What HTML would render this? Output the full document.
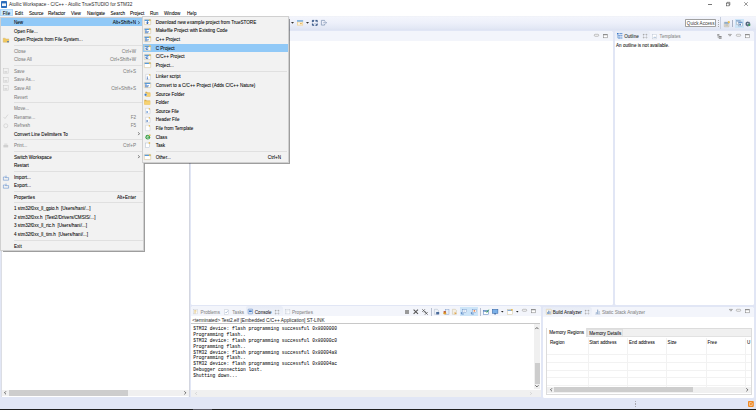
<!DOCTYPE html>
<html><head><meta charset="utf-8"><style>
*{box-sizing:border-box;margin:0;padding:0}
html,body{width:756px;height:410px;overflow:hidden;background:#e1e6f5;font-family:"Liberation Sans",sans-serif;font-size:4.6px;color:#000}
.a{position:absolute}
svg.a{overflow:visible}
.t{position:absolute;white-space:nowrap;line-height:6px;-webkit-text-stroke-width:0.05px}
.mono{font-family:"Liberation Mono",monospace;font-size:4.62px;-webkit-text-stroke-width:0.04px}
.dis{color:#828282}
.g{color:#8a8a8a}
</style></head><body>
<div class="a" style="left:0px;top:0px;width:756px;height:16.3px;background:#fff"></div>
<div class="a" style="left:1px;top:1px;width:5.9px;height:6.5px;background:#2a6cbc;border-radius:0.8px"></div>
<div class="a" style="left:2.1px;top:2.8px;width:3.7px;height:3.3px;background:#eef3f9;border-top:0.6px solid #9dbde0"></div>
<div class="t " style="left:9px;top:2.30px;color:#2a2a2a;-webkit-text-stroke-width:0;font-size:4.72px">Atollic Workspace - C/C++ - Atollic TrueSTUDIO for STM32</div>
<div class="a" style="left:707.9px;top:4.1px;width:4.4px;height:0.5px;background:#777"></div>
<svg class="a" style="left:726px;top:2px" width="4.2" height="4.2" viewBox="0 0 42 42"><rect x="3" y="11" width="28" height="28" fill="none" stroke="#333" stroke-width="5"/><path d="M11 11V3h28v28h-8" fill="none" stroke="#333" stroke-width="5"/></svg>
<svg class="a" style="left:744px;top:2px" width="4" height="4" viewBox="0 0 40 40"><path d="M2 2L38 38M38 2L2 38" stroke="#333" stroke-width="5"/></svg>
<div class="a" style="left:0px;top:8.9px;width:13px;height:7.4px;background:#cce8ff;border:0.5px solid #b0d8fb"></div>
<div class="t " style="left:2.8px;top:10.70px;">File</div>
<div class="t " style="left:15px;top:10.70px;">Edit</div>
<div class="t " style="left:29px;top:10.70px;">Source</div>
<div class="t " style="left:48px;top:10.70px;">Refactor</div>
<div class="t " style="left:71px;top:10.70px;">View</div>
<div class="t " style="left:87px;top:10.70px;">Navigate</div>
<div class="t " style="left:110.5px;top:10.70px;">Search</div>
<div class="t " style="left:130px;top:10.70px;">Project</div>
<div class="t " style="left:150px;top:10.70px;">Run</div>
<div class="t " style="left:164px;top:10.70px;">Window</div>
<div class="t " style="left:187px;top:10.70px;">Help</div>
<div class="a" style="left:0px;top:16.3px;width:756px;height:14.2px;background:linear-gradient(#eef0f6 0%,#f3f5fc 8%,#edf0fa 50%,#e3e8f5 85%,#dde3f2 100%)"></div>
<div class="a" style="left:1.2px;top:30.5px;width:188.3px;height:366px;background:#fff;border-radius:2.6px 2.6px 1.5px 1.5px;overflow:hidden"><div class="a" style="left:0;top:0;width:188.3px;height:10.2px;background:#f3f5fb"></div></div>
<div class="a" style="left:191px;top:30.5px;width:422px;height:274px;background:#fff;border-radius:2.6px 2.6px 1.5px 1.5px;overflow:hidden"><div class="a" style="left:0;top:0;width:422px;height:10.2px;background:#f3f5fb"></div></div>
<div class="a" style="left:614.6px;top:30.5px;width:139.7px;height:274.5px;background:#fff;border-radius:2.6px 2.6px 1.5px 1.5px;overflow:hidden"><div class="a" style="left:0;top:0;width:139.7px;height:10.2px;background:#f3f5fb"></div></div>
<div class="a" style="left:191.3px;top:306.1px;width:350px;height:90.7px;background:#fff;border-radius:2.6px 2.6px 1.5px 1.5px;overflow:hidden"><div class="a" style="left:0;top:0;width:350px;height:10.4px;background:#f3f5fb"></div></div>
<div class="a" style="left:542.8px;top:306.5px;width:211.5px;height:91px;background:#fff;border-radius:2.6px 2.6px 1.5px 1.5px;overflow:hidden"><div class="a" style="left:0;top:0;width:211.5px;height:10px;background:#f3f5fb"></div></div>
<div class="a" style="left:0px;top:408.7px;width:756px;height:1.3px;background:#1f1f1f"></div>
<div class="a" style="left:192.9px;top:408.7px;width:19.2px;height:1.3px;background:#5c5c66"></div>
<div class="a" style="left:0;top:0;width:756px;height:410px;z-index:10">
<div class="a" style="left:0px;top:16.8px;width:144.2px;height:234px;background:#f2f2f2;border:0.5px solid #d0d0d0;box-shadow:0.9px 0.9px 0.7px rgba(0,0,0,.38)"></div>
<div class="a" style="left:1px;top:17.9px;width:141.5px;height:8.4px;background:#91c9f7"></div>
<div class="t " style="left:14px;top:20.00px;">New</div>
<svg class="a" style="left:137.6px;top:20.5px" width="1.8" height="3.4" viewBox="0 0 18 34"><path d="M3 3l11 14L3 31" fill="none" stroke="#2a2a2a" stroke-width="6.5"/></svg>
<div class="t " style="left:89px;width:47px;text-align:right;top:20.00px">Alt+Shift+N</div>
<div class="t " style="left:14px;top:28.62px;">Open File...</div>
<div class="t " style="left:14px;top:37.24px;">Open Projects from File System...</div>
<div class="a" style="left:14px;top:44.849999999999994px;width:128.8px;height:0.5px;background:#e0e0e0"></div>
<div class="t dis" style="left:14px;top:48.66px;">Close</div>
<div class="t dis" style="left:89px;width:47px;text-align:right;top:48.66px">Ctrl+W</div>
<div class="t dis" style="left:14px;top:57.28px;">Close All</div>
<div class="t dis" style="left:89px;width:47px;text-align:right;top:57.28px">Ctrl+Shift+W</div>
<div class="a" style="left:14px;top:64.89px;width:128.8px;height:0.5px;background:#e0e0e0"></div>
<div class="t dis" style="left:14px;top:68.70px;">Save</div>
<div class="t dis" style="left:89px;width:47px;text-align:right;top:68.70px">Ctrl+S</div>
<div class="t dis" style="left:14px;top:77.32px;">Save As...</div>
<div class="t dis" style="left:14px;top:85.94px;">Save All</div>
<div class="t dis" style="left:89px;width:47px;text-align:right;top:85.94px">Ctrl+Shift+S</div>
<div class="t dis" style="left:14px;top:94.56px;">Revert</div>
<div class="a" style="left:14px;top:102.17000000000002px;width:128.8px;height:0.5px;background:#e0e0e0"></div>
<div class="t dis" style="left:14px;top:105.98px;">Move...</div>
<div class="t dis" style="left:14px;top:114.60px;">Rename...</div>
<div class="t dis" style="left:89px;width:47px;text-align:right;top:114.60px">F2</div>
<div class="t dis" style="left:14px;top:123.22px;">Refresh</div>
<div class="t dis" style="left:89px;width:47px;text-align:right;top:123.22px">F5</div>
<div class="t " style="left:14px;top:131.84px;">Convert Line Delimiters To</div>
<svg class="a" style="left:137.6px;top:132.34000000000003px" width="1.8" height="3.4" viewBox="0 0 18 34"><path d="M3 3l11 14L3 31" fill="none" stroke="#2a2a2a" stroke-width="6.5"/></svg>
<div class="a" style="left:14px;top:139.45000000000002px;width:128.8px;height:0.5px;background:#e0e0e0"></div>
<div class="t dis" style="left:14px;top:143.26px;">Print...</div>
<div class="t dis" style="left:89px;width:47px;text-align:right;top:143.26px">Ctrl+P</div>
<div class="a" style="left:14px;top:150.87000000000003px;width:128.8px;height:0.5px;background:#e0e0e0"></div>
<div class="t " style="left:14px;top:154.68px;">Switch Workspace</div>
<svg class="a" style="left:137.6px;top:155.18000000000006px" width="1.8" height="3.4" viewBox="0 0 18 34"><path d="M3 3l11 14L3 31" fill="none" stroke="#2a2a2a" stroke-width="6.5"/></svg>
<div class="t " style="left:14px;top:163.30px;">Restart</div>
<div class="a" style="left:14px;top:170.91000000000005px;width:128.8px;height:0.5px;background:#e0e0e0"></div>
<div class="t " style="left:14px;top:174.72px;">Import...</div>
<div class="t " style="left:14px;top:183.34px;">Export...</div>
<div class="a" style="left:14px;top:190.95000000000007px;width:128.8px;height:0.5px;background:#e0e0e0"></div>
<div class="t " style="left:14px;top:194.76px;">Properties</div>
<div class="t " style="left:89px;width:47px;text-align:right;top:194.76px">Alt+Enter</div>
<div class="a" style="left:14px;top:202.3700000000001px;width:128.8px;height:0.5px;background:#e0e0e0"></div>
<div class="t " style="left:14px;top:206.18px;">1 stm32f0xx_ll_gpio.h&nbsp; [Users/hani/...]</div>
<div class="t " style="left:14px;top:214.80px;">2 stm32f0xx.h&nbsp; [Test2/Drivers/CMSIS/...]</div>
<div class="t " style="left:14px;top:223.42px;">3 stm32f0xx_ll_rtc.h&nbsp; [Users/hani/...]</div>
<div class="t " style="left:14px;top:232.04px;">4 stm32f0xx_ll_tim.h&nbsp; [Users/hani/...]</div>
<div class="a" style="left:14px;top:239.65000000000012px;width:128.8px;height:0.5px;background:#e0e0e0"></div>
<div class="t " style="left:14px;top:243.91px;">Exit</div>
<div class="a" style="left:141.9px;top:16.3px;width:147.3px;height:146.4px;background:#f2f2f2;border:0.5px solid #d0d0d0;box-shadow:0.9px 0.9px 0.7px rgba(0,0,0,.38)"></div>
<div class="a" style="left:142.8px;top:43.6px;width:145.4px;height:8.3px;background:#91c9f7"></div>
<div class="t " style="left:155.7px;top:19.80px;">Download new example project from TrueSTORE</div>
<div class="t " style="left:155.7px;top:28.42px;">Makefile Project with Existing Code</div>
<div class="t " style="left:155.7px;top:37.04px;">C++ Project</div>
<div class="t " style="left:155.7px;top:45.66px;">C Project</div>
<div class="t " style="left:155.7px;top:54.28px;">C/C++ Project</div>
<div class="t " style="left:155.7px;top:62.90px;">Project...</div>
<div class="a" style="left:155.5px;top:70.51px;width:131.5px;height:0.5px;background:#e0e0e0"></div>
<div class="t " style="left:155.7px;top:74.32px;">Linker script</div>
<div class="t " style="left:155.7px;top:82.94px;">Convert to a C/C++ Project (Adds C/C++ Nature)</div>
<div class="t " style="left:155.7px;top:91.56px;">Source Folder</div>
<div class="t " style="left:155.7px;top:100.18px;">Folder</div>
<div class="t " style="left:155.7px;top:108.80px;">Source File</div>
<div class="t " style="left:155.7px;top:117.42px;">Header File</div>
<div class="t " style="left:155.7px;top:126.04px;">File from Template</div>
<div class="t " style="left:155.7px;top:134.66px;">Class</div>
<div class="t " style="left:155.7px;top:143.28px;">Task</div>
<div class="a" style="left:155.5px;top:150.89000000000001px;width:131.5px;height:0.5px;background:#e0e0e0"></div>
<div class="t " style="left:155.7px;top:154.70px;">Other...</div>
<div class="t" style="left:250px;width:31px;text-align:right;top:154.70px">Ctrl+N</div>
<svg class="a" style="left:3px;top:36.5px" width="6" height="5.5" viewBox="0 0 60 55"><path d="M2 12h20l6 7h30v34H2z" fill="#f0c860" stroke="#c9a040" stroke-width="3"/><circle cx="50" cy="48" r="8" fill="#2a64c0"/></svg>
<svg class="a" style="left:3.2px;top:68.2px" width="5.6" height="5.6" viewBox="0 0 56 56"><rect x="4" y="4" width="48" height="48" fill="none" stroke="#c8c8c8" stroke-width="5"/><rect x="14" y="30" width="28" height="18" fill="#d8d8d8"/></svg>
<svg class="a" style="left:3.2px;top:76.8px" width="5.6" height="5.6" viewBox="0 0 56 56"><rect x="4" y="4" width="48" height="48" fill="none" stroke="#c8c8c8" stroke-width="5"/><rect x="14" y="30" width="28" height="18" fill="#d8d8d8"/></svg>
<svg class="a" style="left:3.2px;top:85.4px" width="5.6" height="5.6" viewBox="0 0 56 56"><rect x="4" y="4" width="48" height="48" fill="none" stroke="#c8c8c8" stroke-width="5"/><rect x="14" y="30" width="28" height="18" fill="#d8d8d8"/></svg>
<svg class="a" style="left:3.2px;top:114.2px" width="5.6" height="5.6" viewBox="0 0 56 56"><path d="M6 30l14 16 30-40" fill="none" stroke="#c8c8c8" stroke-width="6"/></svg>
<svg class="a" style="left:3.2px;top:122.6px" width="5.6" height="5.6" viewBox="0 0 56 56"><circle cx="28" cy="28" r="20" fill="none" stroke="#c8c8c8" stroke-width="6"/></svg>
<svg class="a" style="left:3.2px;top:142.6px" width="5.6" height="5.6" viewBox="0 0 56 56"><rect x="4" y="20" width="48" height="24" fill="#d0d0d0"/><rect x="12" y="4" width="32" height="16" fill="#e0e0e0"/></svg>
<svg class="a" style="left:2.8px;top:174.6px" width="6" height="5.6" viewBox="0 0 60 56"><path d="M4 20h18l4 6h30v26H4z" fill="none" stroke="#4a80c8" stroke-width="5"/><path d="M30 6v20" stroke="#4a80c8" stroke-width="6"/></svg>
<svg class="a" style="left:2.8px;top:183.2px" width="6" height="5.6" viewBox="0 0 60 56"><path d="M4 20h18l4 6h30v26H4z" fill="none" stroke="#4a80c8" stroke-width="5"/><path d="M30 26V6" stroke="#4a80c8" stroke-width="6"/></svg>
<svg class="a" style="left:143.9px;top:19.1px" width="7" height="6" viewBox="0 0 70 60"><rect x="3" y="4" width="64" height="52" rx="3" fill="#fff" stroke="#d6c59a" stroke-width="6"/><rect x="6" y="7" width="58" height="13" fill="#5a9ad8"/><circle cx="58" cy="12" r="10" fill="#e6c25a"/><path d="M34 22v24M24 36l10 12 10-12" stroke="#1f56a8" stroke-width="9" fill="none"/></svg>
<svg class="a" style="left:143.9px;top:27.72px" width="7" height="6" viewBox="0 0 70 60"><rect x="3" y="4" width="64" height="52" rx="3" fill="#fff" stroke="#d6c59a" stroke-width="6"/><rect x="6" y="7" width="58" height="13" fill="#5a9ad8"/><circle cx="58" cy="12" r="10" fill="#e6c25a"/><path d="M10 28h18M10 38h40M10 48h30" stroke="#2f68b8" stroke-width="7"/></svg>
<svg class="a" style="left:143.9px;top:36.339999999999996px" width="7" height="6" viewBox="0 0 70 60"><rect x="3" y="4" width="64" height="52" rx="3" fill="#fff" stroke="#d6c59a" stroke-width="6"/><rect x="6" y="7" width="58" height="13" fill="#5a9ad8"/><circle cx="58" cy="12" r="10" fill="#e6c25a"/><path d="M10 28h20M10 38h40M10 48h26" stroke="#2f68b8" stroke-width="7"/></svg>
<svg class="a" style="left:143.9px;top:44.96px" width="7" height="6" viewBox="0 0 70 60"><rect x="3" y="4" width="64" height="52" rx="3" fill="#fff" stroke="#d6c59a" stroke-width="6"/><rect x="6" y="7" width="58" height="13" fill="#5a9ad8"/><circle cx="58" cy="12" r="10" fill="#e6c25a"/><rect x="8" y="22" width="40" height="30" fill="#d4e4f6"/><path d="M38 30a10 10 0 1 0 0 14" stroke="#1f56a8" stroke-width="8" fill="none"/></svg>
<svg class="a" style="left:143.9px;top:53.58px" width="7" height="6" viewBox="0 0 70 60"><rect x="3" y="4" width="64" height="52" rx="3" fill="#fff" stroke="#d6c59a" stroke-width="6"/><rect x="6" y="7" width="58" height="13" fill="#5a9ad8"/><circle cx="58" cy="12" r="10" fill="#e6c25a"/><rect x="8" y="22" width="40" height="30" fill="#d4e4f6"/><path d="M38 30a10 10 0 1 0 0 14" stroke="#1f56a8" stroke-width="8" fill="none"/></svg>
<svg class="a" style="left:143.9px;top:62.199999999999996px" width="7" height="6" viewBox="0 0 70 60"><rect x="3" y="4" width="64" height="52" rx="3" fill="#fff" stroke="#d6c59a" stroke-width="6"/><rect x="6" y="7" width="58" height="13" fill="#5a9ad8"/><circle cx="58" cy="12" r="10" fill="#e6c25a"/></svg>
<svg class="a" style="left:144.6px;top:73.52px" width="6" height="6" viewBox="0 0 60 60"><path d="M8 3h34l12 12v42H8z" fill="#fff" stroke="#b0b8c8" stroke-width="4"/><circle cx="48" cy="9" r="8" fill="#e8c060"/><path d="M24 24v26M18 50h14" stroke="#2a5fae" stroke-width="6"/></svg>
<svg class="a" style="left:143.9px;top:82.24px" width="7" height="6" viewBox="0 0 70 60"><rect x="3" y="4" width="64" height="52" rx="3" fill="#fff" stroke="#d6c59a" stroke-width="6"/><rect x="6" y="7" width="58" height="13" fill="#5a9ad8"/><path d="M10 28h18M10 38h40M10 48h30" stroke="#2f68b8" stroke-width="7"/></svg>
<svg class="a" style="left:144.2px;top:90.75999999999999px" width="6.6" height="6" viewBox="0 0 66 60"><path d="M14 8h16l5 6h28v40H14z" fill="#dcae48"/><path d="M14 22h49v32H14z" fill="#f6d272"/><circle cx="16" cy="38" r="13" fill="#3d7ccc" stroke="#fff" stroke-width="3"/></svg>
<svg class="a" style="left:144.2px;top:99.38px" width="6.6" height="6" viewBox="0 0 66 60"><path d="M3 8h18l5 6h36v42H3z" fill="#dcae48"/><path d="M3 22h59v34H3z" fill="#f6d272"/></svg>
<svg class="a" style="left:144.8px;top:108.0px" width="5.6" height="6" viewBox="0 0 56 60"><path d="M6 3h32l12 12v42H6z" fill="#fff" stroke="#b0b8c8" stroke-width="4"/><circle cx="44" cy="9" r="8" fill="#e8c060"/><path d="M16 28l16 12-16 12z" fill="#3a78c8"/></svg>
<svg class="a" style="left:144.8px;top:116.61999999999999px" width="5.6" height="6" viewBox="0 0 56 60"><path d="M6 3h32l12 12v42H6z" fill="#fff" stroke="#b0b8c8" stroke-width="4"/><circle cx="44" cy="9" r="8" fill="#e8c060"/><path d="M16 28l16 12-16 12z" fill="#2a5fae"/></svg>
<svg class="a" style="left:144.8px;top:125.24000000000001px" width="5.6" height="6" viewBox="0 0 56 60"><path d="M6 3h32l12 12v42H6z" fill="#fff" stroke="#b8c0cc" stroke-width="4"/><circle cx="44" cy="9" r="8" fill="#e8c060"/></svg>
<svg class="a" style="left:144.6px;top:133.85999999999999px" width="6" height="6" viewBox="0 0 60 60"><circle cx="28" cy="32" r="24" fill="#3ea04a"/><path d="M38 24a11 11 0 1 0 0 16" stroke="#fff" stroke-width="7" fill="none"/><circle cx="48" cy="12" r="9" fill="#e8c060"/></svg>
<svg class="a" style="left:144.8px;top:142.48px" width="5.6" height="6" viewBox="0 0 56 60"><rect x="6" y="10" width="40" height="46" fill="#fff" stroke="#9fb0c4" stroke-width="4"/><circle cx="44" cy="10" r="9" fill="#e8c060"/></svg>
<svg class="a" style="left:143.9px;top:153.79999999999998px" width="7" height="6" viewBox="0 0 70 60"><rect x="3" y="4" width="64" height="52" rx="3" fill="#fff" stroke="#d6c59a" stroke-width="6"/><rect x="6" y="7" width="58" height="13" fill="#5a9ad8"/><circle cx="58" cy="12" r="10" fill="#e6c25a"/></svg>
</div>
<svg class="a" style="left:291.2px;top:22.1px" width="3" height="1.8" viewBox="0 0 30 18"><path d="M0 0h30L15 18z" fill="#333"/></svg>
<svg class="a" style="left:296.7px;top:19.8px" width="6.1" height="5.5" viewBox="0 0 61 55"><rect x="0" y="0" width="61" height="55" fill="#f2d496"/><rect x="0" y="0" width="61" height="18" fill="#8ab8e4"/><rect x="8" y="24" width="45" height="24" fill="#fbf4e6"/><rect x="30" y="30" width="18" height="12" fill="#e8b860"/></svg>
<svg class="a" style="left:306.3px;top:22.1px" width="3" height="1.8" viewBox="0 0 30 18"><path d="M0 0h30L15 18z" fill="#333"/></svg>
<svg class="a" style="left:311.8px;top:19.8px" width="5.6" height="5.7" viewBox="0 0 56 57"><g fill="none" stroke="#24467a" stroke-width="9"><path d="M4 22V4h18M34 4h18v18M52 35v18H34M22 53H4V35"/><path d="M8 8l12 12M48 8L36 20M48 49L36 37M8 49l12-12" stroke-width="7"/></g></svg>
<svg class="a" style="left:320.8px;top:20px" width="6.2" height="5.5" viewBox="0 0 62 55"><path d="M36 14V4H4v47h32V40" fill="none" stroke="#7a90b0" stroke-width="7"/><path d="M22 27h32M44 16l13 11-13 11" fill="none" stroke="#7a90b0" stroke-width="6"/></svg>
<div class="a" style="left:685.3px;top:19px;width:30.4px;height:8px;background:#fff;border:0.5px solid #a0a0a0;border-radius:0.8px"></div>
<div class="t " style="left:686.8px;top:20.90px;color:#3a3a3a;font-size:4.62px;-webkit-text-stroke-width:0">Quick Access</div>
<div class="a" style="left:718.1px;top:19.5px;width:0.5px;height:0.7px;background:#aaa"></div>
<div class="a" style="left:718.1px;top:21.5px;width:0.5px;height:0.7px;background:#aaa"></div>
<div class="a" style="left:718.1px;top:23.5px;width:0.5px;height:0.7px;background:#aaa"></div>
<div class="a" style="left:718.1px;top:25.5px;width:0.5px;height:0.7px;background:#aaa"></div>
<div class="a" style="left:720.2px;top:17.2px;width:0.5px;height:12px;background:#c7cfdf"></div>
<svg class="a" style="left:723.9px;top:20.6px" width="6.2" height="6.2" viewBox="0 0 62 62"><rect x="3" y="12" width="46" height="46" rx="3" fill="#f2ead8" stroke="#9a9486" stroke-width="4"/><rect x="5" y="14" width="42" height="12" fill="#5d8fcc"/><path d="M12 36h28M12 46h28" stroke="#7d8a9a" stroke-width="4"/><circle cx="48" cy="12" r="11" fill="#f0c050"/></svg>
<div class="a" style="left:732.2px;top:19.8px;width:0.6px;height:7.5px;background:#a9b2c4"></div>
<div class="a" style="left:734.7px;top:19px;width:9.2px;height:8.8px;background:#cce4f7"></div>
<svg class="a" style="left:735.8px;top:20.4px" width="7" height="6.4" viewBox="0 0 70 64"><rect x="3" y="3" width="40" height="44" fill="#eef2f6" stroke="#8898ac" stroke-width="4"/><rect x="5" y="5" width="36" height="10" fill="#6a9ad4"/><rect x="24" y="20" width="40" height="40" fill="#fff" stroke="#6f86a6" stroke-width="4"/><rect x="26" y="22" width="36" height="10" fill="#4f86c8"/><rect x="34" y="38" width="14" height="16" fill="#2f66b0"/></svg>
<svg class="a" style="left:745.3px;top:20.6px" width="6" height="6" viewBox="0 0 60 60"><g transform="translate(28 28)"><path d="M-5-24h10l2 8 7-4 7 7-4 7 8 2v10l-8 2 4 7-7 7-7-4-2 8h-10l-2-8-7 4-7-7 4-7-8-2v-10l8-2-4-7 7-7 7 4z" fill="#51647a"/><circle r="8" fill="#dfe8f0"/></g><path d="M30 40h22M42 32l10 8-10 8" stroke="#2aa048" stroke-width="7" fill="none"/></svg>
<svg class="a" style="left:594px;top:33.6px" width="5" height="2.6" viewBox="0 0 50 26"><rect x="3" y="3" width="44" height="20" rx="9" fill="#f4f4f4" stroke="#8c8c8c" stroke-width="5"/></svg>
<svg class="a" style="left:602.8px;top:33.9px" width="4.6" height="4.1" viewBox="0 0 46 41"><rect x="3" y="3" width="40" height="35" fill="#fff" stroke="#7c7c7c" stroke-width="5"/><rect x="3" y="3" width="40" height="9" fill="#7c7c7c"/></svg>
<div class="a" style="left:615.2px;top:30.6px;width:34.4px;height:10.1px;background:linear-gradient(#e8ecf6,#f0f3fa);border-radius:2px 2.5px 0 0"></div>
<svg class="a" style="left:616.8px;top:33.3px" width="5.4" height="5.8" viewBox="0 0 54 58"><g fill="#3b78c8"><rect x="0" y="0" width="16" height="14"/><rect x="24" y="3" width="30" height="8"/><rect x="14" y="22" width="14" height="12"/><rect x="32" y="24" width="22" height="8"/><rect x="14" y="44" width="14" height="12"/><rect x="32" y="46" width="22" height="8"/></g><path d="M7 14v36h7M7 28h7" stroke="#3b78c8" stroke-width="4" fill="none"/></svg>
<div class="t " style="left:624.2px;top:34.00px;color:#222">Outline</div>
<svg class="a" style="left:642.9px;top:34px" width="4.2" height="4.3" viewBox="0 0 42 43"><rect x="5" y="5" width="32" height="33" fill="none" stroke="#b0b0b0" stroke-width="4"/><path d="M3 11V3h8M31 3h8v8M39 32v8h-8M11 40H3v-8" fill="none" stroke="#858585" stroke-width="5"/></svg>
<svg class="a" style="left:652.2px;top:33.6px" width="5.3" height="5.4" viewBox="0 0 53 54"><rect x="3" y="3" width="44" height="46" fill="#fff" stroke="#b0bccc" stroke-width="4"/><path d="M12 40l10-18 8 12 6-8 8 14z" fill="#b8c8dc"/></svg>
<div class="t g" style="left:659.6px;top:34.00px;">Templates</div>
<svg class="a" style="left:716.9px;top:33.5px" width="4.8" height="4.6" viewBox="0 0 48 46"><rect x="2" y="2" width="22" height="14" fill="#8a8a8a"/><path d="M10 16v22h10M10 28h10" stroke="#8a8a8a" stroke-width="5" fill="none"/><rect x="20" y="22" width="26" height="10" fill="#6e6e6e"/><rect x="20" y="36" width="26" height="10" fill="#6e6e6e"/></svg>
<svg class="a" style="left:728.3px;top:33.5px" width="3.8" height="2.4" viewBox="0 0 38 24"><path d="M4 4h30L19 22z" fill="#f4f4f4" stroke="#787878" stroke-width="6"/></svg>
<svg class="a" style="left:736px;top:33.5px" width="5" height="2.6" viewBox="0 0 50 26"><rect x="3" y="3" width="44" height="20" rx="9" fill="#f4f4f4" stroke="#8c8c8c" stroke-width="5"/></svg>
<svg class="a" style="left:745px;top:34px" width="4.6" height="4.1" viewBox="0 0 46 41"><rect x="3" y="3" width="40" height="35" fill="#fff" stroke="#7c7c7c" stroke-width="5"/><rect x="3" y="3" width="40" height="9" fill="#7c7c7c"/></svg>
<div class="t " style="left:616px;top:43.00px;color:#111">An outline is not available.</div>
<div class="a" style="left:1.2px;top:40px;width:0.9px;height:356.5px;background:#dcdee4"></div>
<div class="a" style="left:188.8px;top:40px;width:0.7px;height:356.5px;background:#d3d6e0"></div>
<div class="a" style="left:2.1px;top:390px;width:186.7px;height:6.3px;background:#f0f0f0"></div>
<div class="a" style="left:9px;top:390.4px;width:118.8px;height:5.6px;background:#cdcdcd"></div>
<svg class="a" style="left:4.3px;top:391.3px" width="2.4" height="3.6" viewBox="0 0 24 36"><path d="M20 3L5 18l15 15" fill="none" stroke="#404040" stroke-width="8"/></svg>
<svg class="a" style="left:184px;top:391.3px" width="2.4" height="3.6" viewBox="0 0 24 36"><path d="M4 3l15 15L4 33" fill="none" stroke="#404040" stroke-width="8"/></svg>
<div class="a" style="left:246.2px;top:306.2px;width:36.4px;height:10.3px;background:linear-gradient(#e8ecf6,#f0f3fa);border-radius:2px 2.5px 0 0"></div>
<svg class="a" style="left:193.3px;top:309.3px" width="5.3" height="5.5" viewBox="0 0 53 55"><rect x="3" y="3" width="40" height="46" fill="#fff" stroke="#c0c4cc" stroke-width="4"/><path d="M12 16h22M12 28h22M12 40h16" stroke="#d0a030" stroke-width="5"/></svg>
<div class="t g" style="left:200.6px;top:310.00px;">Problems</div>
<svg class="a" style="left:224.4px;top:309.2px" width="5.9" height="5.8" viewBox="0 0 59 58"><rect x="6" y="8" width="40" height="44" fill="#fff" stroke="#b8c0cc" stroke-width="4"/><path d="M14 30l8 10 20-26" stroke="#7a9ac0" stroke-width="5" fill="none"/></svg>
<div class="t g" style="left:232.3px;top:310.00px;">Tasks</div>
<svg class="a" style="left:248.2px;top:309.4px" width="4.8" height="5" viewBox="0 0 48 50"><rect x="2" y="2" width="44" height="46" rx="4" fill="#fff" stroke="#2d63b0" stroke-width="5"/><rect x="10" y="14" width="28" height="18" fill="#3c74c0"/></svg>
<div class="t " style="left:254.8px;top:310.00px;color:#222">Console</div>
<svg class="a" style="left:274.9px;top:309.9px" width="4.2" height="4.3" viewBox="0 0 42 43"><rect x="5" y="5" width="32" height="33" fill="none" stroke="#b0b0b0" stroke-width="4"/><path d="M3 11V3h8M31 3h8v8M39 32v8h-8M11 40H3v-8" fill="none" stroke="#858585" stroke-width="5"/></svg>
<svg class="a" style="left:284.5px;top:309.3px" width="5.4" height="5.5" viewBox="0 0 54 55"><rect x="3" y="3" width="46" height="46" fill="#fff" stroke="#b8c0cc" stroke-width="4"/><path d="M3 18h46M18 18v30" stroke="#c8d0dc" stroke-width="4"/></svg>
<div class="t g" style="left:292px;top:310.00px;">Properties</div>
<div class="a" style="left:404.8px;top:310px;width:4.2px;height:4.2px;background:#9a9a9a"></div>
<svg class="a" style="left:413px;top:309.4px" width="5.8" height="5.4" viewBox="0 0 58 54"><path d="M6 6l44 42M50 6L6 48" stroke="#555" stroke-width="11"/></svg>
<svg class="a" style="left:421.7px;top:309.2px" width="6.3" height="5.8" viewBox="0 0 63 58"><path d="M4 4l24 24M28 4L4 28M30 30l26 26M56 30L30 56" stroke="#555" stroke-width="9"/><path d="M20 36l16-16" stroke="#555" stroke-width="7"/></svg>
<div class="a" style="left:430.5px;top:308.2px;width:0.5px;height:7.6px;background:#b8c0d0"></div>
<svg class="a" style="left:433.9px;top:309.2px" width="5.9" height="5.8" viewBox="0 0 59 58"><path d="M4 3h30l10 10v40H4z" fill="#eef2f8" stroke="#9aa8bc" stroke-width="4"/><rect x="22" y="30" width="30" height="24" fill="#4a6a9a"/></svg>
<svg class="a" style="left:443px;top:309.2px" width="6.5" height="5.8" viewBox="0 0 65 58"><rect x="22" y="3" width="38" height="50" fill="#e8eef8" stroke="#7090c0" stroke-width="4"/><circle cx="18" cy="42" r="14" fill="#e0a030"/><rect x="6" y="22" width="22" height="12" fill="#b04020"/></svg>
<svg class="a" style="left:452px;top:309.2px" width="6" height="5.8" viewBox="0 0 60 58"><path d="M4 3h30l10 10v40H4z" fill="#f4efe4" stroke="#c0b090" stroke-width="4"/><path d="M26 30l20 12-20 12z" fill="#e0a040"/></svg>
<div class="a" style="left:459.8px;top:306.9px;width:18.5px;height:9px;background:#cde5f8"></div>
<svg class="a" style="left:461px;top:309.3px" width="6.4" height="5.6" viewBox="0 0 64 56"><rect x="14" y="6" width="44" height="30" fill="#fff" stroke="#5a86c0" stroke-width="4"/><path d="M4 30v20h24" stroke="#2a5fae" stroke-width="6" fill="none"/><path d="M24 20h20" stroke="#5a86c0" stroke-width="5"/></svg>
<svg class="a" style="left:470.5px;top:309.3px" width="6.4" height="5.6" viewBox="0 0 64 56"><rect x="14" y="6" width="44" height="30" fill="#fff" stroke="#5a86c0" stroke-width="4"/><rect x="26" y="12" width="16" height="14" fill="#e07030"/><path d="M4 30v20h24" stroke="#2a5fae" stroke-width="6" fill="none"/></svg>
<div class="a" style="left:480px;top:308.2px;width:0.5px;height:7.6px;background:#b8c0d0"></div>
<svg class="a" style="left:483px;top:309.4px" width="6" height="5.6" viewBox="0 0 60 56"><rect x="3" y="16" width="50" height="38" fill="#fff" stroke="#4a78b8" stroke-width="5"/><rect x="3" y="16" width="50" height="10" fill="#4a78b8"/><path d="M28 24l10 10 20-28" stroke="#28a040" stroke-width="8" fill="none"/></svg>
<svg class="a" style="left:491.7px;top:309.3px" width="6.3" height="5.6" viewBox="0 0 63 56"><rect x="3" y="3" width="56" height="40" fill="#7ab0e8" stroke="#2e5e9e" stroke-width="5"/><rect x="22" y="44" width="18" height="10" fill="#2e5e9e"/></svg>
<svg class="a" style="left:501.2px;top:310.8px" width="2.6" height="1.6" viewBox="0 0 26 16"><path d="M0 0h26L13 16z" fill="#222"/></svg>
<svg class="a" style="left:507px;top:309px" width="6" height="5.8" viewBox="0 0 60 58"><rect x="3" y="6" width="50" height="49" fill="#fff" stroke="#d6c59a" stroke-width="5"/><rect x="5" y="8" width="46" height="10" fill="#6a9ad0"/><circle cx="48" cy="9" r="9" fill="#e8b848"/></svg>
<svg class="a" style="left:516.2px;top:310.8px" width="2.6" height="1.6" viewBox="0 0 26 16"><path d="M0 0h26L13 16z" fill="#222"/></svg>
<svg class="a" style="left:522px;top:309.3px" width="5" height="2.6" viewBox="0 0 50 26"><rect x="3" y="3" width="44" height="20" rx="9" fill="#f4f4f4" stroke="#8c8c8c" stroke-width="5"/></svg>
<svg class="a" style="left:531.3px;top:309.3px" width="4.6" height="4.1" viewBox="0 0 46 41"><rect x="3" y="3" width="40" height="35" fill="#fff" stroke="#7c7c7c" stroke-width="5"/><rect x="3" y="3" width="40" height="9" fill="#7c7c7c"/></svg>
<div class="t " style="left:192.2px;top:318.10px;color:#222;font-size:4.75px;-webkit-text-stroke-width:0">&lt;terminated&gt; Test2.elf [Embedded C/C++ Application] ST-LINK</div>
<div class="a" style="left:191.3px;top:323.2px;width:349px;height:0.6px;background:#c8c8c8"></div>
<div class="t mono" style="left:193.2px;top:325.90px;color:#111">STM32 device: flash programming successful 0x8000000</div>
<div class="t mono" style="left:193.2px;top:331.80px;color:#111">Programming flash..</div>
<div class="t mono" style="left:193.2px;top:337.70px;color:#111">STM32 device: flash programming successful 0x80000c0</div>
<div class="t mono" style="left:193.2px;top:343.60px;color:#111">Programming flash..</div>
<div class="t mono" style="left:193.2px;top:349.50px;color:#111">STM32 device: flash programming successful 0x80004a8</div>
<div class="t mono" style="left:193.2px;top:355.40px;color:#111">Programming flash..</div>
<div class="t mono" style="left:193.2px;top:361.30px;color:#111">STM32 device: flash programming successful 0x80004ac</div>
<div class="t mono" style="left:193.2px;top:367.20px;color:#111">Debugger connection lost.</div>
<div class="t mono" style="left:193.2px;top:373.10px;color:#111">Shutting down...</div>
<div class="a" style="left:534.4px;top:324.2px;width:6px;height:65.3px;background:#f0f0f0"></div>
<div class="a" style="left:534.6px;top:363px;width:5.1px;height:20.5px;background:#cdcdcd"></div>
<svg class="a" style="left:535.1px;top:326.6px" width="3.8" height="2.4" viewBox="0 0 38 24"><path d="M3 21L19 5l16 16" fill="none" stroke="#404040" stroke-width="8"/></svg>
<svg class="a" style="left:535.1px;top:385.4px" width="3.8" height="2.4" viewBox="0 0 38 24"><path d="M3 3l16 16L35 3" fill="none" stroke="#404040" stroke-width="8"/></svg>
<div class="a" style="left:191.3px;top:389.5px;width:350px;height:7px;background:#f0f0f0"></div>
<svg class="a" style="left:194.6px;top:391.6px" width="2" height="3" viewBox="0 0 20 30"><path d="M18 2L4 15l14 13" fill="none" stroke="#bbb" stroke-width="5"/></svg>
<svg class="a" style="left:529.5px;top:391.6px" width="2" height="3" viewBox="0 0 20 30"><path d="M2 2l14 13L2 28" fill="none" stroke="#bbb" stroke-width="5"/></svg>
<div class="a" style="left:543px;top:306.7px;width:49.3px;height:9.7px;background:linear-gradient(#e8ecf6,#f0f3fa);border-radius:2px 2.5px 0 0"></div>
<svg class="a" style="left:545.5px;top:309.2px" width="5.8" height="5.8" viewBox="0 0 58 58"><rect x="3" y="3" width="50" height="52" rx="3" fill="#f8f6f0" stroke="#d6c59a" stroke-width="5"/><rect x="12" y="30" width="8" height="20" fill="#7a9cc8"/><rect x="24" y="16" width="8" height="34" fill="#3f70b0"/><rect x="36" y="24" width="8" height="26" fill="#5a86c0"/></svg>
<div class="t " style="left:552.7px;top:309.90px;color:#222">Build Analyzer</div>
<svg class="a" style="left:585.4px;top:309.9px" width="4.2" height="4.3" viewBox="0 0 42 43"><rect x="5" y="5" width="32" height="33" fill="none" stroke="#b0b0b0" stroke-width="4"/><path d="M3 11V3h8M31 3h8v8M39 32v8h-8M11 40H3v-8" fill="none" stroke="#858585" stroke-width="5"/></svg>
<svg class="a" style="left:594.7px;top:309.2px" width="5.6" height="5.6" viewBox="0 0 56 56"><path d="M2 52h52" stroke="#9fb3cc" stroke-width="5"/><rect x="8" y="30" width="10" height="20" fill="#a9bdd6"/><rect x="22" y="6" width="10" height="44" fill="#8fa8c8"/><rect x="36" y="20" width="10" height="30" fill="#a9bdd6"/></svg>
<div class="t g" style="left:601.9px;top:309.90px;">Static Stack Analyzer</div>
<svg class="a" style="left:728.5px;top:309px" width="3.8" height="2.4" viewBox="0 0 38 24"><path d="M4 4h30L19 22z" fill="#f4f4f4" stroke="#787878" stroke-width="6"/></svg>
<svg class="a" style="left:735.9px;top:309.1px" width="5" height="2.6" viewBox="0 0 50 26"><rect x="3" y="3" width="44" height="20" rx="9" fill="#f4f4f4" stroke="#8c8c8c" stroke-width="5"/></svg>
<svg class="a" style="left:745px;top:309.3px" width="4.6" height="4.1" viewBox="0 0 46 41"><rect x="3" y="3" width="40" height="35" fill="#fff" stroke="#7c7c7c" stroke-width="5"/><rect x="3" y="3" width="40" height="9" fill="#7c7c7c"/></svg>
<div class="a" style="left:546.3px;top:328.2px;width:205.4px;height:66.6px;border:0.5px solid #dcdcdc;background:#fff"></div>
<div class="a" style="left:587.1px;top:328.7px;width:164.4px;height:8px;background:#f0f0f0;border-bottom:0.5px solid #e2e2e2"></div>
<div class="a" style="left:587.1px;top:329.2px;width:36.2px;height:7.5px;background:#ededed;border:0.5px solid #e0e0e0"></div>
<div class="a" style="left:546.6px;top:328.4px;width:40.6px;height:8.6px;background:#fff;border-right:0.5px solid #e0e0e0"></div>
<div class="t " style="left:549.3px;top:330.00px;color:#111">Memory Regions</div>
<div class="t " style="left:589.3px;top:331.00px;color:#111">Memory Details</div>
<div class="a" style="left:587.8px;top:337.5px;width:0.5px;height:49.5px;background:#f2f2f2"></div>
<div class="a" style="left:626.6px;top:337.5px;width:0.5px;height:49.5px;background:#f2f2f2"></div>
<div class="a" style="left:665.9px;top:337.5px;width:0.5px;height:49.5px;background:#f2f2f2"></div>
<div class="a" style="left:705.6px;top:337.5px;width:0.5px;height:49.5px;background:#f2f2f2"></div>
<div class="a" style="left:744.8px;top:337.5px;width:0.5px;height:49.5px;background:#f2f2f2"></div>
<div class="t " style="left:550px;top:340.10px;color:#111">Region</div>
<div class="t " style="left:589.2px;top:340.10px;color:#111">Start address</div>
<div class="t " style="left:629px;top:340.10px;color:#111">End address</div>
<div class="t " style="left:667.6px;top:340.10px;color:#111">Size</div>
<div class="t " style="left:707.5px;top:340.10px;color:#111">Free</div>
<div class="t " style="left:746.9px;top:340.10px;color:#111">U</div>
<div class="a" style="left:547px;top:354px;width:204px;height:0.5px;background:#f2f2f2"></div>
<div class="a" style="left:547px;top:361.7px;width:204px;height:0.5px;background:#f2f2f2"></div>
<div class="a" style="left:547px;top:369.5px;width:204px;height:0.5px;background:#f2f2f2"></div>
<div class="a" style="left:547px;top:377.2px;width:204px;height:0.5px;background:#f2f2f2"></div>
<div class="a" style="left:547px;top:384.9px;width:204px;height:0.5px;background:#f2f2f2"></div>
<div class="a" style="left:547px;top:386.8px;width:204.4px;height:6px;background:#f0f0f0"></div>
<div class="a" style="left:554.4px;top:387.3px;width:139.1px;height:5.2px;background:#cdcdcd"></div>
<svg class="a" style="left:549.8px;top:388.1px" width="2.4" height="3.6" viewBox="0 0 24 36"><path d="M20 3L5 18l15 15" fill="none" stroke="#404040" stroke-width="8"/></svg>
<svg class="a" style="left:746.3px;top:388.1px" width="2.4" height="3.6" viewBox="0 0 24 36"><path d="M4 3l15 15L4 33" fill="none" stroke="#404040" stroke-width="8"/></svg>
<div class="a" style="left:634.7px;top:400.8px;width:0.5px;height:0.8px;background:#a8a8b0"></div>
<div class="a" style="left:634.7px;top:402.6px;width:0.5px;height:0.8px;background:#a8a8b0"></div>
<div class="a" style="left:634.7px;top:404.4px;width:0.5px;height:0.8px;background:#a8a8b0"></div>
<div class="a" style="left:634.7px;top:406.2px;width:0.5px;height:0.8px;background:#a8a8b0"></div>
<svg class="a" style="left:748.2px;top:401px" width="5.8" height="5.9" viewBox="0 0 58 59"><rect x="0" y="0" width="58" height="59" rx="8" fill="#f08a24"/><path d="M16 16h18l8 8v20H16z" fill="none" stroke="#fff" stroke-width="5"/></svg>
</body></html>
